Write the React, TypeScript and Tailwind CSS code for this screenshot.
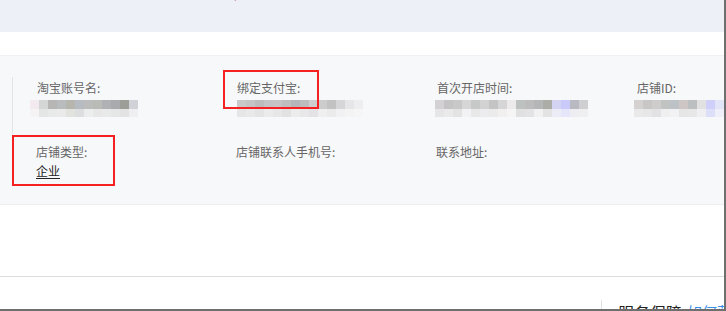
import React from 'react'

const font = { fontFamily: '"Noto Sans CJK SC", "Noto Sans", sans-serif' }

// pixelated (masked) values: top row / bottom row colours
const masks: { top: string[]; bottom: string[] }[] = [
    {
        top: ['#f2eaee', '#d4d6d6', '#b8b5b5', '#b9bcbc', '#b7b6ae', '#b6bcc2', '#bdbcbd', '#b9bbb6', '#b0b1b4', '#a9aaae', '#9d9e98', '#d0d2d8'],
        bottom: ['#f6f3f5', '#e4e6e6', '#e8e9e9', '#e9eae9', '#e2e3de', '#dcdee0', '#eceded', '#e6e7e6', '#e8e9e9', '#e5e6e6', '#e3e3e3', '#efeff2'],
    },
    {
        top: ['#c9c9c9', '#c4c4c4', '#bcbcbc', '#c3c3c5', '#c6c4c4', '#c0bfbf', '#b4b6b9', '#bebdbd', '#cfcfcf', '#cdcccc', '#c2c2c2', '#d6d6d8', '#e6e6e8', '#eeeef0'],
        bottom: ['#e6e6e6', '#e9e9e9', '#e4e4e4', '#ebebec', '#e7e7e7', '#e2e2e2', '#ececec', '#e8e8e8', '#e4e2e4', '#efefef', '#ebebeb', '#f1f1f3', '#f4f4f5', '#f6f6f7'],
    },
    {
        top: ['#d3d1d3', '#c4c4c4', '#c8c8c8', '#d6d6d6', '#c7c8c8', '#d2d2d2', '#c4c4c4', '#d6d6d6', '#eceaea', '#bdc2c0', '#bcbcbc', '#b4b6b8', '#adada8', '#d4d4f2', '#c9c9fa', '#b9b9c2', '#cfcfd1'],
        bottom: ['#e6e6e6', '#eaeaea', '#e3e3e3', '#f2f2f4', '#e8e8e8', '#ececee', '#ebebeb', '#f1f0ef', '#f5f5f5', '#e0e0e0', '#e3e3e6', '#f1f1f1', '#e3e3e3', '#ececf6', '#e6e6fb', '#eeeef2', '#efeff1'],
    },
    {
        top: ['#d6d1d1', '#c9c6c6', '#cfcccc', '#c1c3c3', '#bdc2c6', '#cec6c4', '#bcbfc0', '#e1e1e1', '#cfcff9', '#e2e4f7'],
        bottom: ['#e9e9e9', '#e7e7e7', '#e2e2e5', '#efefef', '#f2f2f4', '#e6e6e6', '#e7e7e7', '#efeff1', '#dddff8', '#eeeff8'],
    },
]

function Mask({ index }: { index: number }) {
    const m = masks[index]
    return (
        <div className="mt-[3px] flex flex-col">
            <div className="flex">
                {m.top.map((c, i) => (
                    <div key={i} className="h-[9px] w-[9px]" style={{ backgroundColor: c }} />
                ))}
            </div>
            <div className="flex">
                {m.bottom.map((c, i) => (
                    <div key={i} className="h-[8px] w-[9px]" style={{ backgroundColor: c }} />
                ))}
            </div>
        </div>
    )
}

function Label({ children }: { children: React.ReactNode }) {
    return <div className="h-[18px] text-[12px] leading-[18px] text-[#666]">{children}</div>
}

export default function App() {
    return (
        <div className="h-[311px] w-[726px] overflow-hidden border-b-2 border-r-2 border-[#6f6f6f] bg-white" style={font}>
            {/* top band */}
            <div className="h-8 overflow-hidden bg-[#edf0f7]">
                <div className="-mt-[17px] ml-[172px] flex gap-[34px] text-[14px] leading-[18px]">
                    <span className="text-[#5a3a6a]">帮助</span>
                    <span className="text-[#b0285a]">,</span>
                </div>
            </div>
            <div className="h-6 border-b border-[#eef0f4]" />

            {/* store info panel */}
            <div className="relative h-[149px] border-b border-[#eceef2] bg-[#f7f8fa] pl-3 pt-[21px]">
                <div className="grid h-[57px] grid-cols-[200px_200px_200px_1fr] border-l border-[#e2e4e8] pl-6 pt-[2px]">
                    <div>
                        <Label>淘宝账号名:</Label>
                        <div className="-ml-[7px]">
                            <Mask index={0} />
                        </div>
                    </div>
                    <div>
                        <Label>绑定支付宝:</Label>
                        <Mask index={1} />
                    </div>
                    <div>
                        <Label>首次开店时间:</Label>
                        <div className="-ml-[2px]">
                            <Mask index={2} />
                        </div>
                    </div>
                    <div>
                        <Label>店铺ID:</Label>
                        <div className="-ml-[3px]">
                            <Mask index={3} />
                        </div>
                    </div>
                </div>
                <div className="mt-[9px] grid grid-cols-[200px_200px_200px_1fr] pl-6">
                    <div>
                        <Label>店铺类型:</Label>
                        <div className="mt-[1px] text-[12px] leading-[18px] text-[#222] underline underline-offset-2">企业</div>
                    </div>
                    <div>
                        <Label>店铺联系人手机号:</Label>
                    </div>
                    <div>
                        <Label>联系地址:</Label>
                    </div>
                </div>

                {/* annotation boxes */}
                <div className="absolute left-[223px] top-[14px] h-[39px] w-[96px] border-2 border-[#f52020]" />
                <div className="absolute left-[12px] top-[79px] h-[51px] w-[103px] border-2 border-[#f52020]" />
            </div>

            <div className="h-[71px]" />
            <div className="border-t border-[#dcdce0]">
                <div className="flex justify-end pt-[23px]">
                    <div className="flex w-[123px] items-start border-l border-[#e3e3e3] pl-4 pt-[2px]">
                        <span className="shrink-0 text-[16px] leading-[20px] text-[#222]">服务保障</span>
                        <span className="ml-[5px] shrink-0 text-[15px] leading-[20px] text-[#3a8ee6]">如何获取</span>
                    </div>
                </div>
            </div>
        </div>
    )
}
